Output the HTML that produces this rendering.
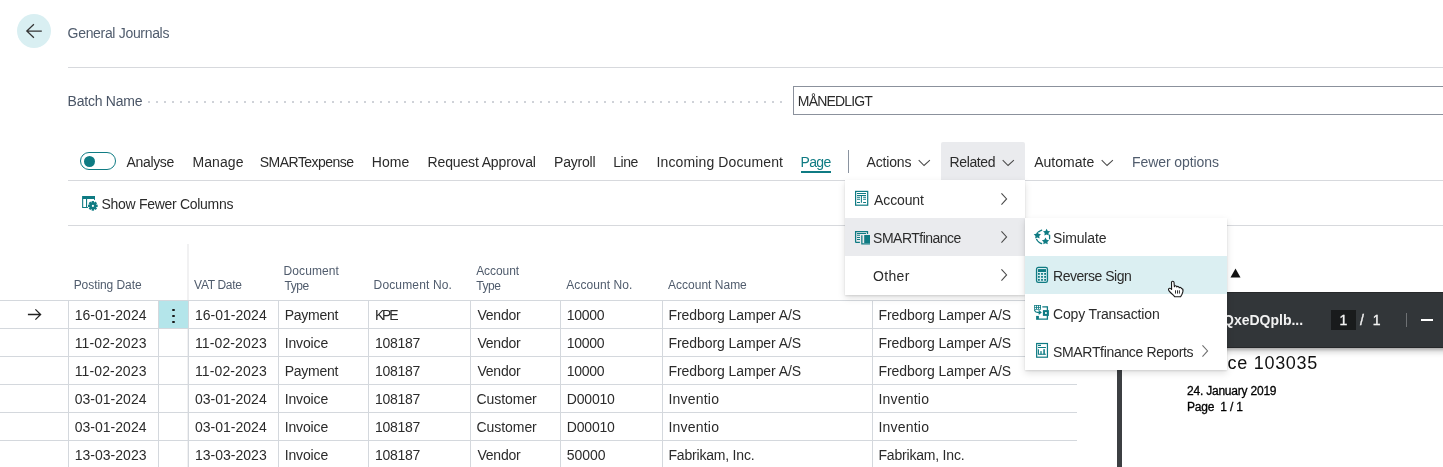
<!DOCTYPE html>
<html><head><meta charset="utf-8"><style>
html,body{margin:0;padding:0;background:#fff;width:1443px;height:467px;overflow:hidden;position:relative}
#w{position:absolute;left:0;top:0;width:1443px;height:467px;will-change:transform}
.t{position:absolute;white-space:nowrap;line-height:0;font-family:"Liberation Sans", sans-serif}
.r{position:absolute}
.menu{background:#fff;box-shadow:0 3.2px 7.2px rgba(0,0,0,.13),0 0.6px 1.8px rgba(0,0,0,.11)}
</style></head><body>
<div id="w">
<div class="r" style="left:17px;top:14px;width:34px;height:34px;border-radius:50%;background:#d9eff2"></div>
<svg class="r" style="left:17px;top:14px" width="34" height="34" viewBox="0 0 34 34"><path d="M9.6 17H24.8M16.9 10.2L9.8 17L16.9 23.8" fill="none" stroke="#333" stroke-width="1.25"/></svg>
<div class="t" style="left:67.60px;top:33.10px;font-size:14px;color:#505c6d;letter-spacing:-0.320px;">General Journals</div>
<div class="r" style="left:68px;top:67px;width:1375px;height:1px;background:#d7d9dd;"></div>
<div class="t" style="left:67.60px;top:101.10px;font-size:14px;color:#4a5566;letter-spacing:-0.244px;">Batch Name</div>
<div class="r" style="left:148px;top:101px;width:640px;height:2px;background-image:linear-gradient(to right,#cfd2d8 0,#cfd2d8 2px,transparent 2px);background-size:8px 2px"></div>
<div class="r" style="left:793px;top:86px;width:660px;height:29px;background:#fff;border:1px solid #8b919c;box-sizing:border-box;"></div>
<div class="t" style="left:797.80px;top:101.10px;font-size:14px;color:#2b2b2b;letter-spacing:-0.825px;">MÅNEDLIGT</div>
<div class="r" style="left:80px;top:152px;width:36px;height:18px;border:1.5px solid #0f7b83;border-radius:9px;box-sizing:border-box"></div>
<div class="r" style="left:83.5px;top:155.5px;width:11px;height:11px;border-radius:50%;background:#0f7b83"></div>
<div class="t" style="left:126.50px;top:162.10px;font-size:14px;color:#2b2b2b;letter-spacing:-0.333px;">Analyse</div>
<div class="t" style="left:192.50px;top:162.10px;font-size:14px;color:#2b2b2b;letter-spacing:0.080px;">Manage</div>
<div class="t" style="left:259.80px;top:162.10px;font-size:14px;color:#2b2b2b;letter-spacing:-0.527px;">SMARTexpense</div>
<div class="t" style="left:371.80px;top:162.10px;font-size:14px;color:#2b2b2b;letter-spacing:0.067px;">Home</div>
<div class="t" style="left:427.60px;top:162.10px;font-size:14px;color:#2b2b2b;letter-spacing:-0.147px;">Request Approval</div>
<div class="t" style="left:554.10px;top:162.10px;font-size:14px;color:#2b2b2b;letter-spacing:-0.233px;">Payroll</div>
<div class="t" style="left:613.30px;top:162.10px;font-size:14px;color:#2b2b2b;letter-spacing:-0.467px;">Line</div>
<div class="t" style="left:656.50px;top:162.10px;font-size:14px;color:#2b2b2b;letter-spacing:0.125px;">Incoming Document</div>
<div class="t" style="left:800.50px;top:162.10px;font-size:14px;color:#0f7b83;letter-spacing:-0.667px;">Page</div>
<div class="r" style="left:801px;top:171px;width:30px;height:2px;background:#0f7b83;"></div>
<div class="r" style="left:848px;top:150px;width:1px;height:23px;background:#8a93a0;"></div>
<div class="t" style="left:866.50px;top:162.10px;font-size:14px;color:#2b2b2b;letter-spacing:-0.167px;">Actions</div>
<svg class="r" style="left:917.5px;top:159px" width="13" height="8" viewBox="0 0 13 8"><path d="M0.7 1.2L6.05 6.5L11.9 1.2" fill="none" stroke="#4a4a4a" stroke-width="1.05"/></svg>
<div class="r" style="left:941px;top:142px;width:84px;height:38px;background:#eaebee;border-radius:2px 2px 0 0;"></div>
<div class="t" style="left:949.60px;top:162.10px;font-size:14px;color:#2b2b2b;letter-spacing:-0.400px;">Related</div>
<svg class="r" style="left:1001.7px;top:159px" width="13" height="8" viewBox="0 0 13 8"><path d="M0.7 1.2L6.05 6.5L11.9 1.2" fill="none" stroke="#4a4a4a" stroke-width="1.05"/></svg>
<div class="t" style="left:1034.20px;top:162.10px;font-size:14px;color:#2b2b2b;letter-spacing:0.029px;">Automate</div>
<svg class="r" style="left:1100.6px;top:159px" width="13" height="8" viewBox="0 0 13 8"><path d="M0.7 1.2L6.05 6.5L11.9 1.2" fill="none" stroke="#4a4a4a" stroke-width="1.05"/></svg>
<div class="t" style="left:1132.00px;top:162.10px;font-size:14px;color:#505c6d;letter-spacing:-0.083px;">Fewer options</div>
<div class="r" style="left:68px;top:180px;width:1375px;height:1px;background:#d7d9dd;"></div>
<svg class="r" style="left:80px;top:193px" width="20" height="20" viewBox="0 0 20 20"><rect x="2.1" y="3" width="12.9" height="3" fill="#0f7b83"/><rect x="14" y="5" width="1" height="1.9" fill="#0f7b83"/><path d="M2.65 5.5V14.45H7.9M6.55 5.5V14" fill="none" stroke="#0f7b83" stroke-width="1.1"/><circle cx="12.85" cy="12.85" r="3.5" fill="#0f7b83"/><rect x="-1.2" y="-4.8" width="2.4" height="2.4" transform="translate(12.85 12.85) rotate(0)" fill="#0f7b83"/><rect x="-1.2" y="-4.8" width="2.4" height="2.4" transform="translate(12.85 12.85) rotate(45)" fill="#0f7b83"/><rect x="-1.2" y="-4.8" width="2.4" height="2.4" transform="translate(12.85 12.85) rotate(90)" fill="#0f7b83"/><rect x="-1.2" y="-4.8" width="2.4" height="2.4" transform="translate(12.85 12.85) rotate(135)" fill="#0f7b83"/><rect x="-1.2" y="-4.8" width="2.4" height="2.4" transform="translate(12.85 12.85) rotate(180)" fill="#0f7b83"/><rect x="-1.2" y="-4.8" width="2.4" height="2.4" transform="translate(12.85 12.85) rotate(225)" fill="#0f7b83"/><rect x="-1.2" y="-4.8" width="2.4" height="2.4" transform="translate(12.85 12.85) rotate(270)" fill="#0f7b83"/><rect x="-1.2" y="-4.8" width="2.4" height="2.4" transform="translate(12.85 12.85) rotate(315)" fill="#0f7b83"/><rect x="11.95" y="11.9" width="1.9" height="1.9" fill="#fff"/></svg>
<div class="t" style="left:101.50px;top:204.10px;font-size:14px;color:#2b2b2b;letter-spacing:-0.294px;">Show Fewer Columns</div>
<div class="r" style="left:68px;top:225px;width:1375px;height:1px;background:#d7d9dd;"></div>
<div class="t" style="left:73.65px;top:284.80px;font-size:12px;color:#505c6d;letter-spacing:-0.064px;">Posting Date</div>
<div class="t" style="left:194.10px;top:284.80px;font-size:12px;color:#505c6d;letter-spacing:-0.314px;">VAT Date</div>
<div class="t" style="left:283.55px;top:270.80px;font-size:12px;color:#505c6d;letter-spacing:0.100px;">Document</div>
<div class="t" style="left:284.55px;top:286.30px;font-size:12px;color:#505c6d;letter-spacing:-0.433px;">Type</div>
<div class="t" style="left:373.60px;top:284.80px;font-size:12px;color:#505c6d;letter-spacing:0.145px;">Document No.</div>
<div class="t" style="left:476.20px;top:270.80px;font-size:12px;color:#505c6d;letter-spacing:-0.067px;">Account</div>
<div class="t" style="left:476.20px;top:286.30px;font-size:12px;color:#505c6d;letter-spacing:-0.400px;">Type</div>
<div class="t" style="left:566.30px;top:284.80px;font-size:12px;color:#505c6d;letter-spacing:0.060px;">Account No.</div>
<div class="t" style="left:668.10px;top:284.80px;font-size:12px;color:#505c6d;">Account Name</div>
<div class="r" style="left:187px;top:244px;width:2px;height:223px;background:#f1f1f2;"></div>
<div class="r" style="left:0px;top:300px;width:1077px;height:1px;background:#d4d8dd;"></div>
<div class="r" style="left:0px;top:328px;width:1077px;height:1px;background:#d4d8dd;"></div>
<div class="r" style="left:0px;top:356px;width:1077px;height:1px;background:#d4d8dd;"></div>
<div class="r" style="left:0px;top:384px;width:1077px;height:1px;background:#d4d8dd;"></div>
<div class="r" style="left:0px;top:412px;width:1077px;height:1px;background:#d4d8dd;"></div>
<div class="r" style="left:0px;top:440px;width:1077px;height:1px;background:#d4d8dd;"></div>
<div class="r" style="left:68px;top:300px;width:1px;height:167px;background:#d4d8dd;"></div>
<div class="r" style="left:158px;top:300px;width:1px;height:167px;background:#d4d8dd;"></div>
<div class="r" style="left:188px;top:300px;width:1px;height:167px;background:#d4d8dd;"></div>
<div class="r" style="left:278px;top:300px;width:1px;height:167px;background:#d4d8dd;"></div>
<div class="r" style="left:368px;top:300px;width:1px;height:167px;background:#d4d8dd;"></div>
<div class="r" style="left:470px;top:300px;width:1px;height:167px;background:#d4d8dd;"></div>
<div class="r" style="left:560px;top:300px;width:1px;height:167px;background:#d4d8dd;"></div>
<div class="r" style="left:662px;top:300px;width:1px;height:167px;background:#d4d8dd;"></div>
<div class="r" style="left:872px;top:300px;width:1px;height:167px;background:#d4d8dd;"></div>
<div class="r" style="left:159px;top:301px;width:29px;height:27px;background:#b4e5ea;"></div>
<div class="r" style="left:172.45px;top:308.7px;width:2.3px;height:2.3px;border-radius:50%;background:#1a1a1a"></div>
<div class="r" style="left:172.45px;top:314.8px;width:2.3px;height:2.3px;border-radius:50%;background:#1a1a1a"></div>
<div class="r" style="left:172.45px;top:320.8px;width:2.3px;height:2.3px;border-radius:50%;background:#1a1a1a"></div>
<svg class="r" style="left:27px;top:308px" width="16" height="14" viewBox="0 0 16 14"><path d="M0.9 6.5H13.5M8.4 1.4L13.6 6.5L8.4 11.6" fill="none" stroke="#222" stroke-width="1.3"/></svg>
<div class="t" style="left:74.70px;top:315.10px;font-size:14px;color:#2b2b2b;letter-spacing:0.022px;">16-01-2024</div>
<div class="t" style="left:194.90px;top:315.10px;font-size:14px;color:#2b2b2b;letter-spacing:0.022px;">16-01-2024</div>
<div class="t" style="left:284.70px;top:315.10px;font-size:14px;color:#2b2b2b;letter-spacing:-0.267px;">Payment</div>
<div class="t" style="left:374.90px;top:315.10px;font-size:14px;color:#2b2b2b;letter-spacing:-2.200px;">KPE</div>
<div class="t" style="left:477.50px;top:315.10px;font-size:14px;color:#2b2b2b;letter-spacing:-0.240px;">Vendor</div>
<div class="t" style="left:566.80px;top:315.10px;font-size:14px;color:#2b2b2b;letter-spacing:-0.300px;">10000</div>
<div class="t" style="left:668.50px;top:315.10px;font-size:14px;color:#2b2b2b;letter-spacing:-0.067px;">Fredborg Lamper A/S</div>
<div class="t" style="left:878.50px;top:315.10px;font-size:14px;color:#2b2b2b;letter-spacing:-0.067px;">Fredborg Lamper A/S</div>
<div class="t" style="left:74.70px;top:343.10px;font-size:14px;color:#2b2b2b;letter-spacing:0.133px;">11-02-2023</div>
<div class="t" style="left:194.90px;top:343.10px;font-size:14px;color:#2b2b2b;letter-spacing:0.133px;">11-02-2023</div>
<div class="t" style="left:284.70px;top:343.10px;font-size:14px;color:#2b2b2b;letter-spacing:-0.133px;">Invoice</div>
<div class="t" style="left:374.90px;top:343.10px;font-size:14px;color:#2b2b2b;letter-spacing:-0.280px;">108187</div>
<div class="t" style="left:477.50px;top:343.10px;font-size:14px;color:#2b2b2b;letter-spacing:-0.240px;">Vendor</div>
<div class="t" style="left:566.80px;top:343.10px;font-size:14px;color:#2b2b2b;letter-spacing:-0.300px;">10000</div>
<div class="t" style="left:668.50px;top:343.10px;font-size:14px;color:#2b2b2b;letter-spacing:-0.067px;">Fredborg Lamper A/S</div>
<div class="t" style="left:878.50px;top:343.10px;font-size:14px;color:#2b2b2b;letter-spacing:-0.067px;">Fredborg Lamper A/S</div>
<div class="t" style="left:74.70px;top:371.10px;font-size:14px;color:#2b2b2b;letter-spacing:0.133px;">11-02-2023</div>
<div class="t" style="left:194.90px;top:371.10px;font-size:14px;color:#2b2b2b;letter-spacing:0.133px;">11-02-2023</div>
<div class="t" style="left:284.70px;top:371.10px;font-size:14px;color:#2b2b2b;letter-spacing:-0.267px;">Payment</div>
<div class="t" style="left:374.90px;top:371.10px;font-size:14px;color:#2b2b2b;letter-spacing:-0.280px;">108187</div>
<div class="t" style="left:477.50px;top:371.10px;font-size:14px;color:#2b2b2b;letter-spacing:-0.240px;">Vendor</div>
<div class="t" style="left:566.80px;top:371.10px;font-size:14px;color:#2b2b2b;letter-spacing:-0.300px;">10000</div>
<div class="t" style="left:668.50px;top:371.10px;font-size:14px;color:#2b2b2b;letter-spacing:-0.067px;">Fredborg Lamper A/S</div>
<div class="t" style="left:878.50px;top:371.10px;font-size:14px;color:#2b2b2b;letter-spacing:-0.067px;">Fredborg Lamper A/S</div>
<div class="t" style="left:74.70px;top:399.10px;font-size:14px;color:#2b2b2b;letter-spacing:0.022px;">03-01-2024</div>
<div class="t" style="left:194.90px;top:399.10px;font-size:14px;color:#2b2b2b;letter-spacing:0.022px;">03-01-2024</div>
<div class="t" style="left:284.70px;top:399.10px;font-size:14px;color:#2b2b2b;letter-spacing:-0.133px;">Invoice</div>
<div class="t" style="left:374.90px;top:399.10px;font-size:14px;color:#2b2b2b;letter-spacing:-0.280px;">108187</div>
<div class="t" style="left:476.50px;top:399.10px;font-size:14px;color:#2b2b2b;letter-spacing:-0.057px;">Customer</div>
<div class="t" style="left:566.80px;top:399.10px;font-size:14px;color:#2b2b2b;letter-spacing:-0.200px;">D00010</div>
<div class="t" style="left:668.50px;top:399.10px;font-size:14px;color:#2b2b2b;letter-spacing:0.200px;">Inventio</div>
<div class="t" style="left:878.50px;top:399.10px;font-size:14px;color:#2b2b2b;letter-spacing:0.200px;">Inventio</div>
<div class="t" style="left:74.70px;top:427.10px;font-size:14px;color:#2b2b2b;letter-spacing:0.022px;">03-01-2024</div>
<div class="t" style="left:194.90px;top:427.10px;font-size:14px;color:#2b2b2b;letter-spacing:0.022px;">03-01-2024</div>
<div class="t" style="left:284.70px;top:427.10px;font-size:14px;color:#2b2b2b;letter-spacing:-0.133px;">Invoice</div>
<div class="t" style="left:374.90px;top:427.10px;font-size:14px;color:#2b2b2b;letter-spacing:-0.280px;">108187</div>
<div class="t" style="left:476.50px;top:427.10px;font-size:14px;color:#2b2b2b;letter-spacing:-0.057px;">Customer</div>
<div class="t" style="left:566.80px;top:427.10px;font-size:14px;color:#2b2b2b;letter-spacing:-0.200px;">D00010</div>
<div class="t" style="left:668.50px;top:427.10px;font-size:14px;color:#2b2b2b;letter-spacing:0.200px;">Inventio</div>
<div class="t" style="left:878.50px;top:427.10px;font-size:14px;color:#2b2b2b;letter-spacing:0.200px;">Inventio</div>
<div class="t" style="left:74.70px;top:455.10px;font-size:14px;color:#2b2b2b;letter-spacing:0.022px;">13-03-2023</div>
<div class="t" style="left:194.90px;top:455.10px;font-size:14px;color:#2b2b2b;letter-spacing:0.022px;">13-03-2023</div>
<div class="t" style="left:284.70px;top:455.10px;font-size:14px;color:#2b2b2b;letter-spacing:-0.133px;">Invoice</div>
<div class="t" style="left:374.90px;top:455.10px;font-size:14px;color:#2b2b2b;letter-spacing:-0.280px;">108187</div>
<div class="t" style="left:477.50px;top:455.10px;font-size:14px;color:#2b2b2b;letter-spacing:-0.240px;">Vendor</div>
<div class="t" style="left:566.80px;top:455.10px;font-size:14px;color:#2b2b2b;letter-spacing:-0.050px;">50000</div>
<div class="t" style="left:668.50px;top:455.10px;font-size:14px;color:#2b2b2b;letter-spacing:-0.200px;">Fabrikam, Inc.</div>
<div class="t" style="left:878.50px;top:455.10px;font-size:14px;color:#2b2b2b;letter-spacing:-0.200px;">Fabrikam, Inc.</div>
<svg class="r" style="left:1230px;top:268px" width="11" height="10" viewBox="0 0 11 10"><path d="M5.5 0.5L10.5 9.5H0.5Z" fill="#111"/></svg>
<div class="r" style="left:1117px;top:348px;width:326px;height:10px;background:transparent;background:linear-gradient(rgba(0,0,0,.32),rgba(0,0,0,.09) 40%,rgba(0,0,0,.02) 75%,rgba(0,0,0,0));"></div>
<div class="r" style="left:1117px;top:292px;width:326px;height:56px;background:#323639;"></div>
<div class="r" style="left:1117px;top:292px;width:326px;height:1px;background:#27292b;"></div>
<div class="r" style="left:1117px;top:347px;width:326px;height:1px;background:#26282a;"></div>
<div class="r" style="left:1117px;top:348px;width:5px;height:120px;background:#3c3f42;"></div>
<div class="t" style="left:1186.00px;top:363.20px;font-size:18px;color:#111;letter-spacing:0.708px;">Invoice 103035</div>
<div class="t" style="left:1187.00px;top:390.80px;font-size:12px;color:#000;letter-spacing:-0.213px;-webkit-text-stroke:0.3px #000;">24. January 2019</div>
<div class="t" style="left:1187.00px;top:406.80px;font-size:12px;color:#000;letter-spacing:-0.220px;-webkit-text-stroke:0.3px #000;">Page  1 / 1</div>
<div class="t" style="left:1223.00px;top:320.10px;font-size:14px;color:#f2f2f2;font-weight:bold;">QxeDQplb...</div>
<div class="r" style="left:1331px;top:310px;width:25px;height:20px;background:#191b1c;"></div>
<div class="t" style="left:1339.60px;top:320.10px;font-size:14px;color:#f2f2f2;-webkit-text-stroke:0.35px #f2f2f2;">1</div>
<div class="t" style="left:1359.90px;top:320.10px;font-size:14px;color:#f2f2f2;-webkit-text-stroke:0.35px #f2f2f2;">/</div>
<div class="t" style="left:1372.80px;top:320.10px;font-size:14px;color:#f2f2f2;-webkit-text-stroke:0.35px #f2f2f2;">1</div>
<div class="r" style="left:1406px;top:313px;width:1px;height:14px;background:#6e7174;"></div>
<div class="r" style="left:1421px;top:319px;width:12px;height:2px;background:#fff;"></div>
<div class="r menu" style="left:845px;top:180px;width:180px;height:115px"></div>
<div class="r" style="left:845px;top:218px;width:180px;height:38px;background:#eaebee;"></div>
<div class="t" style="left:874.10px;top:200.10px;font-size:14px;color:#2b2b2b;letter-spacing:-0.133px;">Account</div>
<div class="t" style="left:873.10px;top:238.10px;font-size:14px;color:#2b2b2b;letter-spacing:-0.509px;">SMARTfinance</div>
<div class="t" style="left:873.10px;top:276.10px;font-size:14px;color:#2b2b2b;letter-spacing:0.300px;">Other</div>
<svg class="r" style="left:1000px;top:193px" width="8" height="13" viewBox="0 0 8 13"><path d="M1.45 0.3L6.6 5.9L1.45 11.55" fill="none" stroke="#4a4a4a" stroke-width="1.05"/></svg>
<svg class="r" style="left:1000px;top:231px" width="8" height="13" viewBox="0 0 8 13"><path d="M1.45 0.3L6.6 5.9L1.45 11.55" fill="none" stroke="#4a4a4a" stroke-width="1.05"/></svg>
<svg class="r" style="left:1000px;top:269px" width="8" height="13" viewBox="0 0 8 13"><path d="M1.45 0.3L6.6 5.9L1.45 11.55" fill="none" stroke="#4a4a4a" stroke-width="1.05"/></svg>
<svg class="r" style="left:852px;top:188px" width="20" height="20" viewBox="0 0 20 20"><rect x="3.6" y="3.4" width="12.1" height="13.8" fill="none" stroke="#0f7b83" stroke-width="1.2"/><path d="M5 5.5H14M5 7.5H14M9.4 7.5V14.8M5 9.3H8M5 11.3H8M5 14.5H8M11.1 9.3H14M11.1 11.3H14M11.1 14.5H14" stroke="#0f7b83" stroke-width="1.05"/></svg>
<svg class="r" style="left:852px;top:226px" width="22" height="20" viewBox="0 0 22 20"><path d="M3.6 16.4V5.6H15.5V7.9M3.6 16.4H7.9" fill="none" stroke="#0f7b83" stroke-width="1.25"/><path d="M5 7.5H14M5 9.3H8M5 11.5H8M5 13.5H8" stroke="#0f7b83" stroke-width="1.05"/><path d="M9.85 9.2V17.8H18" fill="none" stroke="#0f7b83" stroke-width="1.25"/><rect x="12.2" y="9" width="5.8" height="8" fill="#0f7b83"/></svg>
<div class="r menu" style="left:1025px;top:218px;width:202px;height:152px"></div>
<div class="r" style="left:1025px;top:256px;width:202px;height:38px;background:#dbeff2;"></div>
<div class="t" style="left:1053.00px;top:238.10px;font-size:14px;color:#2b2b2b;letter-spacing:-0.143px;">Simulate</div>
<div class="t" style="left:1053.00px;top:276.10px;font-size:14px;color:#2b2b2b;letter-spacing:-0.473px;">Reverse Sign</div>
<div class="t" style="left:1053.00px;top:314.10px;font-size:14px;color:#2b2b2b;letter-spacing:-0.147px;">Copy Transaction</div>
<div class="t" style="left:1053.00px;top:352.10px;font-size:14px;color:#2b2b2b;letter-spacing:-0.326px;">SMARTfinance Reports</div>
<svg class="r" style="left:1201.45px;top:345.1px" width="8" height="13" viewBox="0 0 8 13"><path d="M1.45 0.3L6.6 5.9L1.45 11.55" fill="none" stroke="#707070" stroke-width="1.05"/></svg>
<svg class="r" style="left:1032px;top:226px" width="20" height="20" viewBox="0 0 20 20"><path d="M6.6 5.9L7.6 5.2M8.3 4.8L9.7 4.2M17.6 9.2V12.8M4.6 13.4L5.3 14.4M5.8 15.1L6.6 15.9M7.2 16.4L8.2 17M8.8 17.3L9.6 17.5" fill="none" stroke="#0f7b83" stroke-width="1.3" stroke-linecap="round"/><polygon points="5.35,5.60 6.51,7.80 8.96,8.23 7.23,10.01 7.58,12.47 5.35,11.38 3.12,12.47 3.47,10.01 1.74,8.23 4.19,7.80" fill="#0f7b83"/><polygon points="14.60,2.70 15.76,4.90 18.21,5.33 16.48,7.11 16.83,9.57 14.60,8.48 12.37,9.57 12.72,7.11 10.99,5.33 13.44,4.90" fill="#0f7b83"/><polygon points="13.50,11.50 14.66,13.70 17.11,14.13 15.38,15.91 15.73,18.37 13.50,17.28 11.27,18.37 11.62,15.91 9.89,14.13 12.34,13.70" fill="#0f7b83"/></svg>
<svg class="r" style="left:1032px;top:264px" width="20" height="20" viewBox="0 0 20 20"><rect x="4.55" y="3.45" width="10.9" height="15" rx="1.8" fill="none" stroke="#0f7b83" stroke-width="1.3"/><path d="M6 5.1H14V8H6Z" fill="#0f7b83"/><rect x="6.00" y="9.00" width="1.8" height="1.8" fill="#0f7b83"/><rect x="6.00" y="11.98" width="1.8" height="1.8" fill="#0f7b83"/><rect x="6.00" y="14.96" width="1.8" height="1.8" fill="#0f7b83"/><rect x="9.10" y="9.00" width="1.8" height="1.8" fill="#0f7b83"/><rect x="9.10" y="11.98" width="1.8" height="1.8" fill="#0f7b83"/><rect x="9.10" y="14.96" width="1.8" height="1.8" fill="#0f7b83"/><rect x="12.20" y="9.00" width="1.8" height="1.8" fill="#0f7b83"/><rect x="12.20" y="11.98" width="1.8" height="1.8" fill="#0f7b83"/><rect x="12.20" y="14.96" width="1.8" height="1.8" fill="#0f7b83"/></svg>
<svg class="r" style="left:1032px;top:302px" width="20" height="20" viewBox="0 0 20 20"><rect x="2.1" y="3" width="6.9" height="4.7" fill="#0f7b83"/><rect x="2.85" y="3.75" width="1.2" height="1.2" fill="#fff"/><rect x="2.85" y="5.75" width="1.2" height="1.2" fill="#fff"/><rect x="4.90" y="3.75" width="1.2" height="1.2" fill="#fff"/><rect x="4.90" y="5.75" width="1.2" height="1.2" fill="#fff"/><rect x="6.95" y="3.75" width="1.2" height="1.2" fill="#fff"/><rect x="6.95" y="5.75" width="1.2" height="1.2" fill="#fff"/><path d="M2.7 7.5V8.6Q3.2 10 5.5 10.4L8.3 10.4" fill="none" stroke="#0f7b83" stroke-width="1.2"/><path d="M6.6 8.5L8.9 10.4L6.6 12.3" fill="none" stroke="#0f7b83" stroke-width="1.2"/><rect x="4.1" y="13.9" width="2.8" height="3.9" fill="#0f7b83"/><path d="M6.8 17.15H15.4V8.5M15.4 4.95H10.3" fill="none" stroke="#0f7b83" stroke-width="1.3"/><path d="M15.4 4.3V8.5" fill="none" stroke="#0f7b83" stroke-width="1.3"/><rect x="10.9" y="8.1" width="6" height="5.8" fill="#0f7b83"/><rect x="13.05" y="10" width="1.75" height="2" fill="#e5f2f3"/></svg>
<svg class="r" style="left:1032px;top:340px" width="20" height="20" viewBox="0 0 20 20"><rect x="4.65" y="3.5" width="10.8" height="13.7" fill="none" stroke="#0f7b83" stroke-width="1.2"/><path d="M6 5.4H9M6 7.5H13.9" stroke="#0f7b83" stroke-width="1.1"/><path d="M6.4 9.2V14.3H13.9" fill="none" stroke="#0f7b83" stroke-width="1.1"/><rect x="8.35" y="11.1" width="1.3" height="3.4" fill="#0f7b83"/><rect x="11.3" y="9.2" width="1.55" height="5.3" fill="#0f7b83"/></svg>
<svg class="r" style="left:1163px;top:276px" width="26" height="26" viewBox="0 0 26 26"><path d="M8.6 13.5L8.5 6.4C8.4 4.9 10.9 4.8 11 6.3L11.4 10.8L11.6 10.2C12.3 9.4 13.4 9.6 13.6 10.5L13.8 11C14.6 10.1 15.8 10.3 16 11.3L16.2 11.8C17 11.1 18.3 11.4 18.4 12.4L19.6 12.9C20.2 13.8 19.8 16.5 19 18.2L17.6 20.8H11.8L10.8 19.6C9.5 18.4 7.2 16.3 6 14.8C5.2 13.8 5.3 12.4 6.6 12.2C7.6 12.1 8.1 12.7 8.6 13.5Z" fill="#fff" stroke="#1a1a1a" stroke-width="1.1" stroke-linejoin="round"/><path d="M12.5 14.3V17.6M14.5 14.3V17.6M16.4 14.3V17.6" stroke="#1a1a1a" stroke-width="0.9"/></svg>
</div>
</body></html>
